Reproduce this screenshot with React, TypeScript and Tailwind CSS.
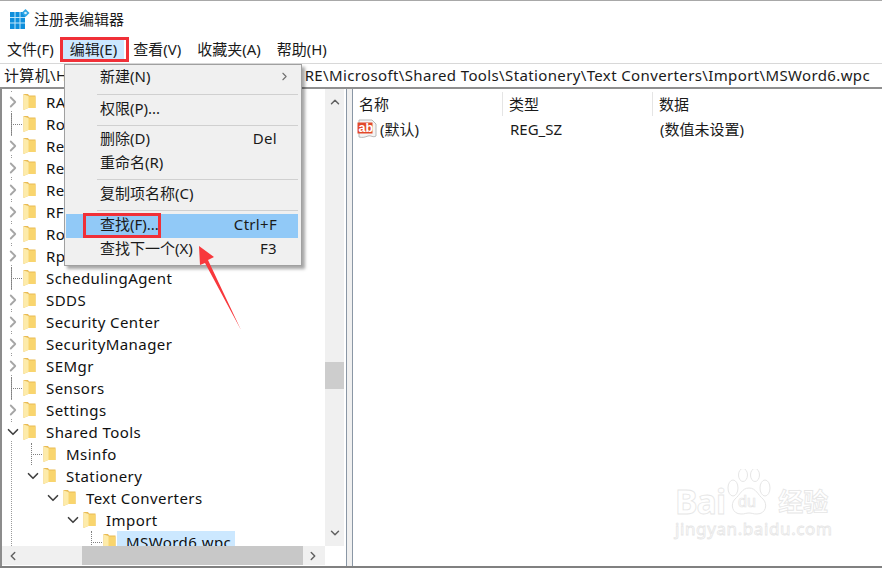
import { ChevronRight, ChevronDown, ChevronUp, ChevronLeft } from 'lucide-react'

type TreeRow = { label: string; depth: number; kind: 'closed' | 'open' | 'leaf'; selected?: boolean }

const treeRows: TreeRow[] = [
  { label: 'RADAR', depth: 0, kind: 'closed' },
  { label: 'Router', depth: 0, kind: 'leaf' },
  { label: 'Reliability', depth: 0, kind: 'closed' },
  { label: 'RemovalTools', depth: 0, kind: 'closed' },
  { label: 'Restore', depth: 0, kind: 'closed' },
  { label: 'RFID', depth: 0, kind: 'closed' },
  { label: 'Routing', depth: 0, kind: 'closed' },
  { label: 'Rpc', depth: 0, kind: 'closed' },
  { label: 'SchedulingAgent', depth: 0, kind: 'leaf' },
  { label: 'SDDS', depth: 0, kind: 'closed' },
  { label: 'Security Center', depth: 0, kind: 'closed' },
  { label: 'SecurityManager', depth: 0, kind: 'closed' },
  { label: 'SEMgr', depth: 0, kind: 'closed' },
  { label: 'Sensors', depth: 0, kind: 'leaf' },
  { label: 'Settings', depth: 0, kind: 'closed' },
  { label: 'Shared Tools', depth: 0, kind: 'open' },
  { label: 'Msinfo', depth: 1, kind: 'leaf' },
  { label: 'Stationery', depth: 1, kind: 'open' },
  { label: 'Text Converters', depth: 2, kind: 'open' },
  { label: 'Import', depth: 3, kind: 'open' },
  { label: 'MSWord6.wpc', depth: 4, kind: 'leaf', selected: true },
]

const menuBar = ['文件(F)', '编辑(E)', '查看(V)', '收藏夹(A)', '帮助(H)']

const editMenu = [
  { label: '新建(N)', arrow: true, gap: 'h-[8px]' },
  { label: '权限(P)...', gap: 'h-[6px]' },
  { label: '删除(D)', shortcut: 'Del' },
  { label: '重命名(R)', gap: 'h-[7px]' },
  { label: '复制项名称(C)', gap: 'h-[7px]' },
  { label: '查找(F)...', shortcut: 'Ctrl+F', active: true },
  { label: '查找下一个(X)', shortcut: 'F3' },
]

function Folder() {
  return (
    <svg width="13" height="18" viewBox="0 0 13 18" className="shrink-0">
      <path d="M0.5 1H5l1 1.5h6.5V15H5l-4.5 2z" fill="#e9bb55" />
      <path d="M5 3.5h7.5V15H5z" fill="#f9d56e" />
      <path d="M0.5 1.5 5.5 3V15L0.5 17z" fill="#fdebaa" />
    </svg>
  )
}

function Row({ row }: { row: TreeRow }) {
  return (
    <div className="relative flex h-[22px] shrink-0 items-center">
      <div className={row.depth === 0 ? 'w-0' : row.depth === 1 ? 'w-[20px]' : row.depth === 2 ? 'w-[40px]' : row.depth === 3 ? 'w-[60px]' : 'w-[80px]'} />
      <div className="relative flex h-full w-[21px] shrink-0 items-center justify-center">
        {row.kind === 'closed' && <ChevronRight size={18} strokeWidth={2.4} className="bg-white text-[#a6a6a6]" />}
        {row.kind === 'open' && <ChevronDown size={18} strokeWidth={2.2} className="bg-white text-[#404040]" />}
        {row.kind === 'leaf' && (
          <>
            <span className="absolute left-[9px] top-0 h-full border-l border-dotted border-[#808080]" />
            <span className="absolute left-[9px] top-[11px] w-[11px] border-t border-dotted border-[#808080]" />
          </>
        )}
      </div>
      <Folder />
      <div className={row.selected ? 'ml-[1px] flex h-full items-center bg-[#cce8ff] pl-[9px] pr-[4px]' : 'ml-[1px] flex h-full items-center pl-[9px] pr-[4px]'}>
        <span className="whitespace-nowrap text-[15px] tracking-[0.43px] text-[#101010]">{row.label}</span>
      </div>
    </div>
  )
}

function Tree() {
  return (
    <div className="relative flex w-[323px] flex-col overflow-hidden pt-[2px]">
      <span className="absolute left-[9px] top-[2px] h-full border-l border-dotted border-[#9a9a9a]" />
      {treeRows.map((row) => (
        <Row key={row.label} row={row} />
      ))}
    </div>
  )
}

function EditMenu() {
  return (
    <div className="absolute left-[64px] top-[63px] z-10 flex h-[202px] w-[238px] flex-col border border-[#a0a0a0] bg-[#f0f0f0] py-[1px] pl-[1px] pr-[3px] shadow-[3px_3px_3px_rgba(0,0,0,0.35)]">
      {editMenu.map((item) => (
        <div key={item.label}>
          <div className={item.active ? 'flex h-[24px] items-center bg-[#91c9f7] pb-[3px] pl-[34px] pr-[21px] text-[15px] text-[#1a1a1a]' : 'flex h-[24px] items-center pb-[3px] pl-[34px] pr-[21px] text-[15px] text-[#1a1a1a]'}>
            <span className="whitespace-nowrap">{item.label}</span>
            {item.shortcut && <span className="ml-auto whitespace-nowrap tracking-[0.3px]">{item.shortcut}</span>}
            {item.arrow && <ChevronRight size={13} strokeWidth={2} className="-mr-[14px] ml-auto text-[#707070]" />}
          </div>
          {item.gap && (
            <div className={item.gap + ' flex items-center pl-[31px]'}>
              <div className="h-[1px] w-full bg-[#d0d0d0]" />
            </div>
          )}
        </div>
      ))}
    </div>
  )
}

function Watermark() {
  return (
    <div className="absolute left-[675px] top-[480px] z-10 flex w-[180px] flex-col items-start text-transparent [-webkit-text-stroke:0.8px_#e6e6e6]">
      <div className="flex items-center">
        <span className="text-[34px] font-bold leading-[40px] tracking-[-1px]">Bai</span>
        <svg width="46" height="50" viewBox="0 0 46 50" className="-mt-[14px] ml-[1px]" fill="none" stroke="#e6e6e6" strokeWidth="1">
          <ellipse cx="7" cy="19" rx="5" ry="8" />
          <ellipse cx="17" cy="6" rx="4.5" ry="6.5" />
          <ellipse cx="29" cy="6" rx="4.5" ry="6.5" />
          <ellipse cx="39" cy="19" rx="5" ry="8" />
          <path d="M23 19c-7 0-9 7-14 11-5 5-3 15 6 15 4 0 5-1 8-1s4 1 8 1c9 0 11-10 6-15-5-4-7-11-14-11z" />
          <text x="12" y="38" fontSize="16" fontFamily="Liberation Sans, sans-serif" strokeWidth="0.7">du</text>
        </svg>
        <span className="ml-[6px] text-[25px] font-bold leading-[40px]">经验</span>
      </div>
      <span className="-mt-[2px] text-[17px] leading-[20px] tracking-[0.6px]">jingyan.baidu.com</span>
    </div>
  )
}

export default function App() {
  return (
    <div className="relative flex h-[568px] w-[882px] flex-col overflow-hidden border-t border-[#a8a8a8] bg-white font-['Noto_Sans','Noto_Sans_CJK_SC',sans-serif] text-[#1a1a1a]">
      {/* title */}
      <div className="flex h-[37px] shrink-0 items-center pb-[1px] pl-[10px]">
        <svg width="20" height="20" viewBox="0 0 20 20" className="shrink-0">
          <path d="M0 3h15v17H0z" fill="#0f8fdc" />
          <path d="M5 3v17M10 3v17M0 8.5h15M0 14h15" stroke="#bfe6fb" strokeWidth="1" />
          <path d="M15.5 0 19.5 4 15.5 8 11.5 4z" fill="#2ea6e6" />
          <circle cx="15.5" cy="4" r="1.3" fill="#d9f1fc" />
        </svg>
        <span className="ml-[4px] text-[15px]">注册表编辑器</span>
      </div>

      {/* menu bar */}
      <div className="flex h-[25px] shrink-0 items-center gap-[2px] text-[15px]">
        {menuBar.map((m) => (
          <div key={m} className={m === '编辑(E)' ? 'flex h-[22px] items-center bg-[#cce8ff] px-[7px] pb-[2px]' : 'flex h-[22px] items-center px-[7px] pb-[2px]'}>
            {m}
          </div>
        ))}
      </div>

      {/* address */}
      <div className="flex h-[26px] shrink-0 items-center overflow-hidden whitespace-nowrap border-b-2 border-t border-b-[#8f8f8f] border-t-[#d8d8d8] pl-[4px] pr-[12px] text-[15px] tracking-[0.37px]">
        <span>计算机\HKEY_LOCAL_MACHINE\SOFTWA</span>
        <span className="ml-auto">RE\Microsoft\Shared Tools\Stationery\Text Converters\Import\MSWord6.wpc</span>
      </div>

      {/* panes */}
      <div className="flex min-h-0 flex-1 border-b-2 border-b-[#808080]">
        <div className="flex w-[346px] shrink-0 flex-col border-l-2 border-[#8c8c8c]">
          <div className="flex min-h-0 flex-1">
            <Tree />
            <div className="flex w-[19px] flex-col items-center bg-[#f0f0f0] py-[6px]">
              <ChevronUp size={14} strokeWidth={2.5} className="text-[#606060]" />
              <div className="mt-[253px] h-[27px] w-full bg-[#cdcdcd]" />
              <ChevronDown size={14} strokeWidth={2.5} className="mt-auto text-[#606060]" />
            </div>
          </div>
          <div className="flex h-[19px] shrink-0 items-center">
            <div className="flex h-full w-[323px] items-center bg-[#f0f0f0]">
              <ChevronLeft size={14} strokeWidth={2.5} className="ml-[4px] w-[14px] text-[#606060]" />
              <div className="ml-[62px] h-full w-[221px] bg-[#c8c8c8]" />
              <ChevronRight size={14} strokeWidth={2.5} className="ml-[3px] text-[#606060]" />
            </div>
          </div>
          <div className="h-[1px] shrink-0" />
        </div>

        {/* splitter */}
        <div className="w-[7px] shrink-0 border-x border-[#8a97a5] bg-[#f0f0f0]" />

        {/* list */}
        <div className="flex min-w-0 flex-1 flex-col">
          <div className="flex h-[27px] shrink-0 items-center pt-[3px] text-[15px]">
            <div className="h-full w-[150px] border-r border-[#e5e5e5] pl-[6px] leading-[24px]">名称</div>
            <div className="h-full w-[150px] border-r border-[#e5e5e5] pl-[6px] leading-[24px]">类型</div>
            <div className="h-full pl-[6px] leading-[24px]">数据</div>
          </div>
          <div className="mt-[1px] flex h-[24px] shrink-0 items-center text-[15px]">
            <div className="flex w-[151px] items-center pl-[4px]">
              <svg width="20" height="20" viewBox="0 0 20 20" className="shrink-0">
                <path d="M2 1h13l4 4v12c-3 2-5-1-8 0s-5 2-9 1z" fill="#f4f4f4" stroke="#b8b8b8" />
                <path d="M0.5 3.5h15v11h-15z" fill="#e2492a" />
                <text x="1.5" y="13" fontSize="12.5" fontWeight="700" fill="#fff" fontFamily="Liberation Sans, sans-serif">ab</text>
              </svg>
              <span className="ml-[3px]">(默认)</span>
            </div>
            <div className="w-[150px] pl-[6px]">REG_SZ</div>
            <div className="pl-[6px]">(数值未设置)</div>
          </div>
        </div>
      </div>

      <EditMenu />

      {/* annotations drawn on the screenshot */}
      <div className="absolute left-[60px] top-[36px] z-20 h-[25px] w-[69px] border-[3px] border-[#f03038]" />
      <div className="absolute left-[83px] top-[212px] z-20 h-[25px] w-[78px] border-[3px] border-[#f03038]" />
      <svg className="absolute left-[190px] top-[235px] z-20" width="60" height="100" viewBox="190 235 60 100">
        <path d="M199 245 214 256 208 259 241 329 205 262 200 264z" fill="#f8383c" />
      </svg>
      <Watermark />
    </div>
  )
}
